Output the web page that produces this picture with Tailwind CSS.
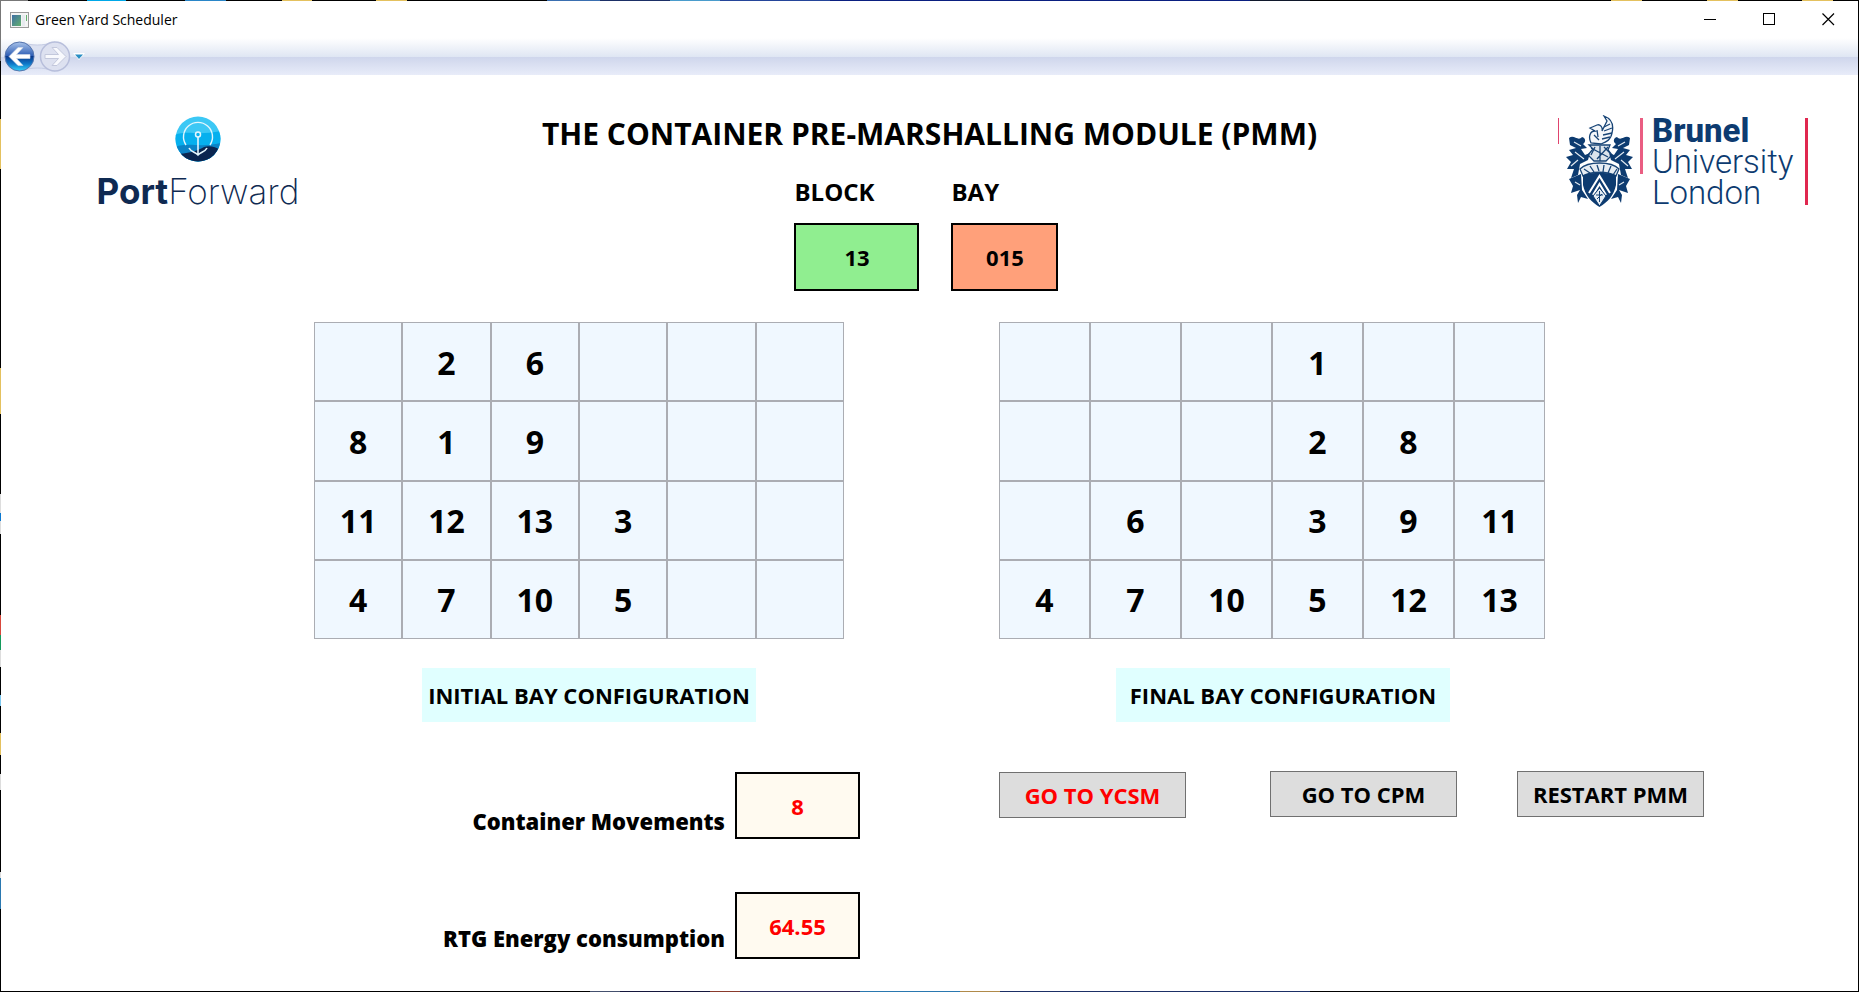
<!DOCTYPE html>
<html lang="en">
<head>
  <meta charset="UTF-8" />
  <title>Green Yard Scheduler</title>
  <script src="https://cdn.jsdelivr.net/npm/@tailwindcss/browser@4"></script>
</head>
<body class="bg-black font-['Open_Sans','Noto_Sans',sans-serif] text-black">
<div class="min-h-screen flex flex-col">

  <!-- desktop showing round the window -->
  <div class="h-px bg-[linear-gradient(to_right,#777_28px,#000_28px_87px,#00a8e8_87px_126px,#000_126px_185px,#2a86c8_185px_226px,#000_226px_282px,#e4c15e_282px_312px,#000_312px_376px,#e4c15e_376px_407px,#000_407px_547px,#3a6fb0_547px_600px,#1b2f66_600px_670px,#4a9ccc_670px_720px,#24459a_720px_830px,#0a1f80_830px_1250px,#10182c_1250px_1310px,#000_1310px_1611px,#e4c15e_1611px_1642px,#000_1642px_1707px,#e4c15e_1707px_1738px,#000_1738px_1802px,#e4c15e_1802px_1833px,#000_1833px)]"></div>

  <div class="grow flex">
  <div class="shrink-0 w-px bg-[linear-gradient(to_bottom,#777_60px,#000_60px_118px,#e4c15e_118px_168px,#000_168px_367px,#e4c15e_367px_413px,#000_413px_493px,#ddd_493px_512px,#0b78d0_512px_520px,#ddd_520px_533px,#000_533px_614px,#d8483c_614px_634px,#149a5c_634px_649px,#ddd_649px_666px,#000_666px_694px,#7cc8f0_694px_705px,#000_705px_732px,#e4c15e_732px_754px,#000_754px_773px,#ddd_773px_789px,#000_789px_871px,#ddd_871px_877px,#2a78b0_877px_908px,#000_908px)]"></div>

  <div class="grow min-w-0 bg-white flex flex-col">
  <!-- title bar -->
  <header class="h-[37px] flex items-center justify-between pl-[9px] pr-[23px]">
    <div class="flex items-center gap-[6px]">
      <svg class="w-[19px] h-[16px]" viewBox="0 0 19 16">
        <defs>
          <linearGradient id="appIcon" x1="0" y1="0" x2="1" y2="1">
            <stop offset="0" stop-color="#3f6fa5" />
            <stop offset="1" stop-color="#62b06c" />
          </linearGradient>
        </defs>
        <rect x="0.5" y="0.5" width="18" height="15" fill="#f4f4f4" stroke="#9a9a9a" />
        <rect x="2" y="3" width="9" height="11" fill="url(#appIcon)" />
        <rect x="12" y="3" width="3" height="11" fill="#e6eaee" />
        <rect x="16" y="3" width="1" height="6" fill="#62b06c" />
      </svg>
      <h1 class="text-[14px] leading-5">Green Yard Scheduler</h1>
    </div>
    <div class="flex items-center gap-[46px]">
      <button aria-label="Minimize"><svg class="w-[13px] h-[13px]" viewBox="0 0 13 13"><path d="M0 6.5h12" stroke="#000" /></svg></button>
      <button aria-label="Maximize"><svg class="w-[13px] h-[13px]" viewBox="0 0 13 13"><rect x="0.5" y="0.5" width="11" height="11" fill="none" stroke="#000" /></svg></button>
      <button aria-label="Close"><svg class="w-[13px] h-[13px]" viewBox="0 0 13 13"><path d="M0.5 0.5l11.500 11.500M12 0.500L0.500 12" stroke="#000" stroke-width="1.200" /></svg></button>
    </div>
  </header>

  <!-- navigation bar -->
  <nav class="h-[37px] bg-[linear-gradient(to_bottom,#ffffff_0%,#dfe6f3_51%,#cfd6ec_52%,#e8ecf9_100%)]">
    <svg class="w-[84px] h-[37px]" viewBox="0 0 84 37">
      <defs>
        <linearGradient id="backTop" x1="0" y1="0" x2="0" y2="1">
          <stop offset="0" stop-color="#a9c3ea" />
          <stop offset="0.48" stop-color="#2c5cb4" />
          <stop offset="0.5" stop-color="#0c3a8c" />
          <stop offset="0.75" stop-color="#0f77c8" />
          <stop offset="1" stop-color="#35d6fa" />
        </linearGradient>
      </defs>
      <path d="M20 4C30 8 42 8 54 4V33C42 29 30 29 20 33Z" fill="#dce1f1" stroke="#c5cce4" />
      <circle cx="18.500" cy="18.500" r="14.500" fill="url(#backTop)" stroke="#5574ad" />
      <path d="M8 18.500l9-9h5l-6.500 7H29v4H15.500l6.500 7h-5z" fill="#fff" stroke="#d5dcea" stroke-width="0.600" />
      <circle cx="54" cy="18.500" r="14.500" fill="#dde1f0" stroke="#b7bedb" stroke-width="1.500" />
      <path d="M65 18.500l-9-9h-5l6.500 7H44v4h13.500l-6.500 7h5z" fill="#f8f9fd" stroke="#c3c8dc" />
      <path d="M72 15h12l-6 7z" fill="#fff" />
      <path d="M74 16.500h8l-4 4.500z" fill="#2a8fc4" />
    </svg>
  </nav>

  <main class="grow">
    <!-- logos and block / bay -->
    <section class="grid grid-cols-[1fr_auto_1fr] items-start">
      <div class="pl-[94px] pt-[41px]">
        <div class="w-[206px] flex flex-col items-center">
          <svg class="w-[46px] h-[46px]" viewBox="0 0 46 46">
            <defs><clipPath id="disc"><circle cx="23" cy="23" r="22.500" /></clipPath></defs>
            <g clip-path="url(#disc)">
              <rect width="46" height="46" fill="#3cc8f5" />
              <path d="M0 19C12 14 22 20 46 15V46H0Z" fill="#06b0ee" />
              <path d="M0 31C14 26 24 32 46 27V46H0Z" fill="#0b83c6" />
              <path d="M0 38C12 38 22 35 29 31C35 29 40 31 46 34V46H0Z" fill="#0a2550" />
            </g>
            <path d="M11 29A14.500 14.500 0 1 1 35 29" fill="none" stroke="#e4f6fd" stroke-width="1.400" />
            <circle cx="23" cy="18.500" r="2.500" fill="none" stroke="#e4f6fd" stroke-width="1.500" />
            <path d="M23 21V39M14 32C16 36 20 36 23 39C26 36 30 36 32 32" fill="none" stroke="#e4f6fd" stroke-width="1.600" />
          </svg>
          <p class="mt-[9px] text-[35px] leading-[40px] font-['Inter',sans-serif] text-[#0f2a52] whitespace-nowrap"><span class="font-bold">Port</span><span class="font-extralight">Forward</span></p>
        </div>
      </div>

      <div class="pt-[39px] flex flex-col items-center">
        <h2 class="text-[30px] leading-[40px] font-bold">THE CONTAINER PRE-MARSHALLING MODULE (PMM)</h2>
        <div class="mt-[22px] mr-[6px] flex gap-[32px]">
          <div class="flex flex-col">
            <label for="block" class="mb-[15px] text-[24px] leading-8 font-bold">BLOCK</label>
            <input id="block" readonly value="13" class="w-[125px] h-[68px] border-2 border-black bg-[#90ee90] text-center text-[22px] font-bold" />
          </div>
          <div class="flex flex-col">
            <label for="bay" class="mb-[15px] text-[24px] leading-8 font-bold">BAY</label>
            <input id="bay" readonly value="015" class="w-[107px] h-[68px] border-2 border-black bg-[#ffa07a] text-center text-[22px] font-bold" />
          </div>
        </div>
      </div>

      <div class="flex justify-end pr-[50px] pt-[37px]">
        <div class="flex items-start">
          <div class="mt-[6px] w-px h-[26px] bg-[#e0446e]"></div>
          <svg class="ml-[7px] mt-[3px] w-[67px] h-[93px]" viewBox="0 0 67 93">
            <g fill="none" stroke="#174476" stroke-width="1.300">
              <path d="M25 28C22 22 24 16 29 16L24 13L31 10C34 9 37 12 36 16L41 6L38 1C46 4 48 10 46 18C45 25 40 27 35 29Z" fill="#f4f7fa" />
              <path d="M38 12L44 9M38 16L46 13M37 20L46 18M36 24L44 22M28 20L33 25M31 15L32 22" />
              <path d="M23 30H44L42 35L46 40L40 46H28L22 40L27 34Z" fill="#dce4ec" />
              <path d="M25 33L42 42M29 32L25 40M34 31V46M38 32L44 38M31 44L42 32" />
              <path d="M14 54C22 46 45 46 53 54L50 61C42 56 25 56 17 61Z" fill="#e7edf3" />
              <path d="M18 54L24 58M24 51L28 57M31 50L33 56M38 50L37 57M45 51L42 58M51 54L47 60" />
            </g>
            <g fill="#0d3b70">
              <path d="M3 23C8 19 12 27 16 22C20 23 20 27 17 29L21 33L15 34L19 40L24 38L22 45L14 49L12 60L5 63L8 54L1 54L5 47L0 42L7 40L3 35L10 33L4 30Z" />
              <path d="M64 23C59 19 55 27 51 22C47 23 47 27 50 29L46 33L52 34L48 40L43 38L45 45L53 49L55 60L62 63L59 54L66 54L62 47L67 42L60 40L64 35L57 33L63 30Z" />
              <path d="M17 60C27 57 40 57 50 60V70C48 80 42 87 33.500 92C25 87 19 80 17 70Z" />
              <path d="M3 64L15 59L16 75L22 84L15 82L12 88L11 80L14 75L5 78L7 71Z" />
              <path d="M64 64L52 59L51 75L45 84L52 82L55 88L56 80L53 75L62 78L60 71Z" />
            </g>
            <path d="M23 78L33.500 61L44 78M27 80L33.500 69L40 80" fill="none" stroke="#fff" stroke-width="2" />
            <path d="M33.500 73L40 81L33.500 91L27 81Z" fill="#e6edf3" stroke="#0d3b70" />
            <path d="M33.500 76V87M30 80H37M31 84L36 79" stroke="#174476" />
            <path d="M8 27L15 31M9 37L18 44M5 51L12 45M59 27L52 31M58 37L49 44M62 51L55 45M9 67L14 70M58 67L53 70" stroke="#dfe7ef" stroke-width="1.200" />
          </svg>
          <div class="ml-[7px] mt-[6px] w-[3px] h-[56px] bg-[#ea5d82]"></div>
          <p class="ml-[9px] mt-[3px] w-[153px] text-[33px] leading-[31px] font-['Roboto',sans-serif] font-light text-[#0d3b70]"><span class="block font-extrabold">Brunel</span><span class="block">University</span><span class="block">London</span></p>
          <div class="mt-[6px] w-[3px] h-[87px] bg-[#e0274f]"></div>
        </div>
      </div>
    </section>

    <!-- bays -->
    <section class="mt-[31px] grid grid-cols-[313fr_530fr_155fr_546fr_313fr]">
      <div class="col-start-2 flex flex-col items-center">
        <table id="initialBay" class="w-full h-[317px] table-fixed border-separate border-spacing-0 bg-[#f0f8ff] text-center text-[32px] leading-10 font-bold" aria-labelledby="initialTitle"></table>
        <h3 id="initialTitle" class="ml-[20px] mt-[29px] w-[334px] h-[54px] bg-[#e0ffff] text-center text-[22px] leading-[54px] font-bold whitespace-nowrap">INITIAL BAY CONFIGURATION</h3>
      </div>
      <div class="col-start-4 flex flex-col items-center">
        <table id="finalBay" class="w-full h-[317px] table-fixed border-separate border-spacing-0 bg-[#f0f8ff] text-center text-[32px] leading-10 font-bold" aria-labelledby="finalTitle"></table>
        <h3 id="finalTitle" class="ml-[22px] mt-[29px] w-[334px] h-[54px] bg-[#e0ffff] text-center text-[22px] leading-[54px] font-bold whitespace-nowrap">FINAL BAY CONFIGURATION</h3>
      </div>
    </section>

    <!-- results and buttons -->
    <section class="mt-[49px] pb-8 grid grid-cols-[859fr_139fr_859fr]">
      <div class="mt-px flex flex-col gap-[53px]">
        <div class="flex justify-end items-end gap-[10px]">
          <label for="movements" class="pb-[2px] text-[22px] leading-8 font-extrabold">Container Movements</label>
          <input id="movements" readonly value="8" class="w-[125px] h-[67px] border-2 border-black bg-[#fffaf0] text-center text-[22px] font-bold text-[#ff0000]" />
        </div>
        <div class="flex justify-end items-end gap-[10px]">
          <label for="energy" class="pb-[5px] text-[22px] leading-8 font-extrabold">RTG Energy consumption</label>
          <input id="energy" readonly value="64.55" class="w-[125px] h-[67px] border-2 border-black bg-[#fffaf0] text-center text-[22px] font-bold text-[#ff0000]" />
        </div>
      </div>
      <div class="col-start-3 flex items-start">
        <button class="mt-px w-[187px] h-[46px] border border-[#707070] bg-[#dddddd] text-[22px] font-bold whitespace-nowrap text-[#ff0000]">GO TO YCSM</button>
        <button class="ml-[84px] w-[187px] h-[46px] border border-[#707070] bg-[#dddddd] text-[22px] font-bold whitespace-nowrap">GO TO CPM</button>
        <button class="ml-[60px] w-[187px] h-[46px] border border-[#707070] bg-[#dddddd] text-[22px] font-bold whitespace-nowrap">RESTART PMM</button>
      </div>
    </section>
  </main>
  </div>

  <div class="shrink-0 w-px bg-black"></div>
  </div>
  <div class="h-px bg-[linear-gradient(to_right,#000_590px,#44506e_590px_620px,#14163c_620px_710px,#8a3a2c_710px_740px,#2a2a5a_740px_860px,#2a78b0_860px_960px,#b08a4a_960px_1000px,#1b2f66_1000px_1310px,#000_1310px)]"></div>
</div>

<script>
  // rows go from the top tier down, 0 is an empty slot
  const initialBay = [
    [0, 2, 6, 0, 0, 0],
    [8, 1, 9, 0, 0, 0],
    [11, 12, 13, 3, 0, 0],
    [4, 7, 10, 5, 0, 0]
  ];
  const finalBay = [
    [0, 0, 0, 1, 0, 0],
    [0, 0, 0, 2, 8, 0],
    [0, 6, 0, 3, 9, 11],
    [4, 7, 10, 5, 12, 13]
  ];

  function renderBay(id, rows) {
    const table = document.getElementById(id);
    table.innerHTML = rows.map(row => `
      <tr class="h-1/4">${row.map(n => `<td class="pt-[2px] border border-[#abadb3]">${n || ''}</td>`).join('')}</tr>
    `).join('');
  }

  renderBay('initialBay', initialBay);
  renderBay('finalBay', finalBay);
</script>
</body>
</html>
